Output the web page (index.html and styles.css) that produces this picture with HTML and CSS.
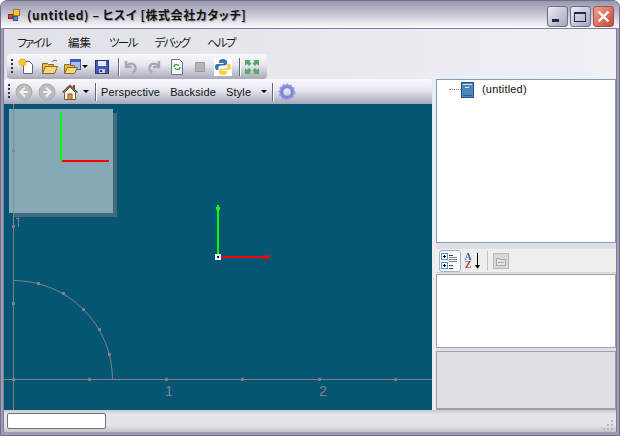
FILE: index.html
```html
<!DOCTYPE html>
<html lang="ja">
<head>
  <meta charset="UTF-8">
  <title>ヒスイ</title>
  <link rel="stylesheet" href="styles.css">
</head>
<body>

<div class="window">
  <div class="titlebar">
    <svg class="app-icon" width="16" height="16" viewBox="0 0 16 16">
      <rect x="2" y="11" width="4" height="3" fill="#c8c8d8"/>
      <rect x="6.5" y="2.5" width="6" height="6" fill="#f5c53a" stroke="#a87818"/>
      <rect x="1.5" y="7.500" width="4" height="4" fill="#d8442c" stroke="#8a2a18"/>
      <rect x="6.5" y="9.500" width="4" height="4" fill="#5a8ad0" stroke="#34588c"/>
    </svg>
    <span class="title-text">(untitled) – ヒスイ [株式会社カタッチ]</span>
    <div class="caption-btns">
      <div class="caption-btn">
        <svg width="21" height="21" viewBox="0 0 21 21"><rect x="5" y="13" width="7" height="3" fill="#1e2a4a"/></svg>
      </div>
      <div class="caption-btn">
        <svg width="21" height="21" viewBox="0 0 21 21"><rect x="4.5" y="6.500" width="11" height="9" fill="none" stroke="#1e2a4a"/><rect x="4" y="6" width="12" height="2" fill="#1e2a4a"/></svg>
      </div>
      <div class="caption-btn caption-close">
        <svg width="21" height="21" viewBox="0 0 21 21"><path d="M5.500 5.500l10 10M15.500 5.500l-10 10" stroke="#fff" stroke-width="2.400"/></svg>
      </div>
    </div>
  </div>

  <div class="client">
    <div class="menubar">
      <span class="menu-item menu-kana">ファイル</span>
      <span class="menu-item">編集</span>
      <span class="menu-item menu-kana">ツール</span>
      <span class="menu-item menu-kana">デバッグ</span>
      <span class="menu-item menu-kana">ヘルプ</span>
    </div>

    <div class="main-strip">
      <div class="toolbar toolbar-main">
        <span class="grip"></span>
        <svg class="tool" width="18" height="18" viewBox="0 0 18 18">
          <path d="M5.500 3.500h6l3 3v9h-9z" fill="#fff" stroke="#5c6478"/>
          <circle cx="4.500" cy="4.500" r="3.500" fill="#f8c828" stroke="#f07818" stroke-dasharray="1 1"/>
        </svg>
        <svg class="tool" width="18" height="18" viewBox="0 0 18 18">
          <path d="M1.500 15.500v-10h5l1 1h5v2" fill="#e8b848" stroke="#8a6a20"/>
          <path d="M1.500 15.500l3-7h12l-3 7z" fill="#f8d878" stroke="#8a6a20"/>
          <path d="M11 4c1-2 3-2 5-1" fill="none" stroke="#4c6cac"/>
        </svg>
        <svg class="tool tool-narrow" width="18" height="18" viewBox="0 0 18 18">
          <rect x="6.500" y="1.500" width="10" height="10" fill="#a8c0f0" stroke="#3c5cac"/>
          <rect x="7" y="2" width="9" height="2" fill="#3c64c8"/>
          <path d="M0.500 15.500v-9h5l1 1h4v2" fill="#e8b848" stroke="#8a6a20"/>
          <path d="M0.500 15.500l3-6h10l-3 6z" fill="#f8d878" stroke="#8a6a20"/>
        </svg>
        <span class="arrow arrow-open"></span>
        <svg class="tool" width="18" height="18" viewBox="0 0 18 18">
          <rect x="2.500" y="2.500" width="13" height="13" fill="#4a58b8" stroke="#2c3478"/>
          <rect x="5" y="3" width="8" height="5" fill="#e8ecf8"/>
          <rect x="6" y="11" width="6" height="4" fill="#c8ccd8"/>
          <rect x="7" y="12" width="2" height="2" fill="#2c3478"/>
        </svg>
        <span class="sep"></span>
        <svg class="tool" width="18" height="18" viewBox="0 0 18 18">
          <path d="M4 3v6h6M4.500 8.500c2-4 8-4 9 1 .5 2-1 4-3 5" fill="none" stroke="#a8a8b4" stroke-width="2.400"/>
        </svg>
        <svg class="tool" width="18" height="18" viewBox="0 0 18 18">
          <path d="M14 3v6H8M13.500 8.500c-2-4-8-4-9 1-.5 2 1 4 3 5" fill="none" stroke="#a8a8b4" stroke-width="2.400"/>
        </svg>
        <svg class="tool" width="18" height="18" viewBox="0 0 18 18">
          <path d="M3.500 1.500h8l3 3v12h-11z" fill="#f8f8fc" stroke="#6a7288"/>
          <path d="M6 9c0-3 4-3 5-1M12 9c0 3-4 3-5 1" fill="none" stroke="#38a038" stroke-width="1.400"/>
        </svg>
        <svg class="tool" width="18" height="18" viewBox="0 0 18 18">
          <rect x="4.500" y="4.500" width="9" height="9" fill="#b4b4b8" stroke="#9c9ca4"/>
        </svg>
        <svg class="tool" width="18" height="18" viewBox="0 0 18 18">
          <rect width="18" height="18" fill="#fff"/>
          <path d="M9 1c-3 0-4 1-4 2.500V5h4.500v1H3C1.500 6 1 7.500 1 9s.5 3 2 3h1.500v-2c0-1.500 1-2.500 2.500-2.500h4c1 0 2-1 2-2v-2C13 2 11 1 9 1z" fill="#3a76b0"/>
          <path d="M9 17c3 0 4-1 4-2.500V13H8.500v-1H15c1.500 0 2-1.500 2-3s-.5-3-2-3h-1.500v2c0 1.500-1 2.500-2.500 2.500H7c-1 0-2 1-2 2v2C5 16 7 17 9 17z" fill="#f8d040"/>
        </svg>
        <span class="sep"></span>
        <svg class="tool" width="18" height="18" viewBox="0 0 18 18">
          <path d="M2 2h6L6.500 3.500l2 2-2.500 2.500-2-2L2 8z" fill="#58a868"/>
          <path d="M16 2h-6l1.500 1.500-2 2 2.500 2.500 2-2L16 8z" fill="#58a868"/>
          <path d="M2 16h6l-1.500-1.500 2-2L6 10l-2 2-2-2z" fill="#58a868"/>
          <path d="M16 16h-6l1.500-1.500-2-2L12 10l2 2 2-2z" fill="#58a868"/>
        </svg>
      </div>
      <div class="body-split">
        <div class="left-col">
          <div class="toolbar toolbar-view">
            <span class="grip"></span>
            <svg class="tool" width="18" height="18" viewBox="0 0 18 18">
              <circle cx="9" cy="9" r="8" fill="#bcbcc0" stroke="#a8a8ac"/>
              <path d="M10 4.500L5.500 9l4.500 4.500M6 9h7" fill="none" stroke="#f0f0f0" stroke-width="2"/>
            </svg>
            <svg class="tool" width="18" height="18" viewBox="0 0 18 18">
              <circle cx="9" cy="9" r="8" fill="#bcbcc0" stroke="#a8a8ac"/>
              <path d="M8 4.500L12.500 9 8 13.500M12 9H5" fill="none" stroke="#f0f0f0" stroke-width="2"/>
            </svg>
            <svg class="tool tool-narrow" width="18" height="18" viewBox="0 0 18 18">
              <rect x="12" y="2" width="2" height="4" fill="#8a4a28"/>
              <path d="M3.500 9.500v7h11v-7L9 4z" fill="#fbf8ec" stroke="#5a5a4a"/>
              <path d="M1.500 9.500L9 2.500l7.500 7" fill="none" stroke="#4a5a40" stroke-width="1.600"/>
              <path d="M5 5.500L9 2l4 3.500" fill="none" stroke="#c84828"/>
              <rect x="7" y="11" width="4" height="5.500" fill="#e89828" stroke="#8a5a18"/>
            </svg>
            <span class="arrow arrow-home"></span>
            <span class="sep sep-tight"></span>
            <span class="tool-label">Perspective</span>
            <span class="tool-label">Backside</span>
            <span class="tool-label">Style</span>
            <span class="arrow arrow-style"></span>
            <span class="sep"></span>
            <svg class="tool" width="18" height="18" viewBox="0 0 18 18">
              <circle cx="9" cy="9" r="5.500" fill="none" stroke="#7c88dc" stroke-width="3.500"/>
              <circle cx="9" cy="9" r="7.500" fill="none" stroke="#9ca4e4" stroke-width="2" stroke-dasharray="2.500 1.300"/>
            </svg>
          </div>

          <div class="viewport">
            <svg class="scene" width="428" height="306" viewBox="0 0 428 306" shape-rendering="crispEdges">
              <!-- axes -->
              <line x1="9.500" y1="0" x2="9.500" y2="306" stroke="#7e8288"/>
              <line x1="0" y1="275.500" x2="428" y2="275.500" stroke="#7e8288"/>
              <g fill="#7e7e7e">
                <rect x="8" y="198" width="3" height="3"/>
                <rect x="8" y="274" width="3" height="3"/>
                <rect x="84" y="274" width="3" height="3"/>
                <rect x="161" y="274" width="3" height="3"/>
                <rect x="237" y="274" width="3" height="3"/>
                <rect x="314" y="274" width="3" height="3"/>
                <rect x="390" y="274" width="3" height="3"/>
                <rect x="33" y="178" width="3" height="3"/>
                <rect x="58" y="188" width="3" height="3"/>
                <rect x="78" y="204" width="3" height="3"/>
                <rect x="94" y="224" width="3" height="3"/>
                <rect x="104" y="249" width="3" height="3"/>
              </g>
              <path d="M9.500 176.500A99 99 0 0 1 108.500 275" fill="none" stroke="#7e8288" shape-rendering="auto"/>
              <text class="scale-label" x="165" y="292">1</text>
              <text class="scale-label" x="319" y="292">2</text>

              <!-- inset view -->
              <rect x="9" y="9" width="104" height="104" fill="#436a7b"/>
              <rect x="5" y="5" width="104" height="104" fill="#86a9b8"/>
              <line x1="9.500" y1="0" x2="9.500" y2="122" stroke="#808c94"/>
              <rect x="8" y="45" width="3" height="3" fill="#808c94"/>
              <line x1="14.500" y1="113" x2="14.500" y2="123" stroke="#7e8288"/>
              <line x1="12" y1="114.500" x2="14" y2="114.500" stroke="#7e8288"/>
              <rect x="8" y="121" width="3" height="3" fill="#7e7e7e"/>
              <rect x="56" y="9" width="2" height="48" fill="#00ff00"/>
              <rect x="58" y="56" width="47" height="2" fill="#ff0000"/>

              <!-- manipulator -->
              <rect x="213" y="101" width="2" height="50" fill="#00ff00"/>
              <rect x="212" y="103" width="4" height="3" fill="#00ff00"/>
              <rect x="215" y="152" width="51" height="2" fill="#ff0000"/>
              <rect x="261" y="151" width="3" height="4" fill="#ff0000"/>
              <rect x="211" y="150" width="6" height="6" fill="#fff"/>
              <rect x="213" y="152" width="2" height="2" fill="#0000e0"/>
            </svg>
          </div>
        </div>

        <div class="right-col">
          <div class="tree-pane">
            <div class="tree-row">
              <span class="tree-dots"></span>
              <svg width="14" height="16" viewBox="0 0 14 16">
                <rect x="0.500" y="0.500" width="12" height="15" fill="#4c88b8" stroke="#2c4c98"/>
                <rect x="2" y="2" width="9" height="1" fill="#c8dcf0"/>
                <rect x="4" y="5" width="4" height="1" fill="#e8e0f8"/>
                <rect x="2" y="13" width="9" height="1" fill="#2c5c98"/>
              </svg>
              <span class="tree-label">(untitled)</span>
            </div>
          </div>
          <div class="prop-toolbar">
            <div class="prop-btn prop-btn-on">
              <svg width="20" height="20" viewBox="0 0 20 20">
                <rect x="1.500" y="2.500" width="6" height="6" fill="#fff" stroke="#5c94c8"/>
                <rect x="1.500" y="11.500" width="6" height="6" fill="#fff" stroke="#5c94c8"/>
                <path d="M3 5.500h3M4.500 4v3M3 14.500h3M4.500 13v3" stroke="#000"/>
                <path d="M9 4.500h4M9 14.500h4M9 17.500h4" stroke="#404040"/>
                <path d="M9 6.500h8M9 8.500h8M9 10.500h8" stroke="#808080"/>
              </svg>
            </div>
            <div class="prop-btn">
              <span class="az">A Z</span>
              <svg class="az-arrow" width="6" height="20" viewBox="0 0 6 20">
                <path d="M3.500 2v14" stroke="#000"/>
                <path d="M1 14h5l-2.500 4z" fill="#000"/>
              </svg>
            </div>
            <span class="prop-sep"></span>
            <svg class="prop-pages" width="16" height="16" viewBox="0 0 16 16">
              <rect width="16" height="16" fill="#b8b8b8"/>
              <rect x="1" y="1" width="14" height="14" fill="#d8d8d8"/>
              <path d="M3.500 12.500v-7h3v1h6v6z" fill="#e4e4e4" stroke="#a8a8a8"/>
              <path d="M5 9.500h6" stroke="#a8a8a8"/>
            </svg>
          </div>
          <div class="prop-grid"></div>
          <div class="prop-desc"></div>
        </div>
      </div>
    </div>

    <div class="statusbar">
      <div class="progress"></div>
      <svg class="resize-grip" width="12" height="12" viewBox="0 0 12 12">
        <rect x="9" y="1" width="2" height="2" fill="#b8b8c4"/>
        <rect x="5" y="5" width="2" height="2" fill="#b8b8c4"/>
        <rect x="9" y="5" width="2" height="2" fill="#b8b8c4"/>
        <rect x="1" y="9" width="2" height="2" fill="#b8b8c4"/>
        <rect x="5" y="9" width="2" height="2" fill="#b8b8c4"/>
        <rect x="9" y="9" width="2" height="2" fill="#b8b8c4"/>
      </svg>
    </div>
  </div>
</div>

</body>
</html>
```

FILE: styles.css
```css
html, body {
  margin: 0;
  height: 100%;
}

body {
  background: #ffffff;
  font-family: "Noto Sans CJK JP", "Liberation Sans", sans-serif;
  font-feature-settings: "palt";
  overflow: hidden;
}

.window {
  width: 620px;
  height: 436px;
  box-sizing: border-box;
  display: flex;
  flex-direction: column;
  background: #9c9cb4;
  border: 1px solid #6f6f88;
  border-radius: 7px 7px 0 0;
  padding: 0 2px 3px;
}

.titlebar {
  height: 27px;
  flex: none;
  display: flex;
  align-items: center;
  margin: 0 -2px;
  padding: 0 5px 0 6px;
  background: linear-gradient(#9896ae 0%, #b4b3c6 30%, #dcdce6 70%, #fbfbfd 100%);
  border-radius: 6px 6px 0 0;
}

.app-icon {
  margin-right: 4px;
  flex: none;
}

.title-text {
  font-size: 12px;
  font-weight: bold;
  color: #111111;
  letter-spacing: 0.55px;
  text-shadow: 1px 1px 1px #a0a0a8;
  white-space: nowrap;
}

.caption-btns {
  display: flex;
  gap: 2px;
  margin-left: auto;
  align-self: flex-end;
  margin-bottom: 1px;
}

.caption-btn {
  width: 21px;
  height: 21px;
  box-sizing: border-box;
  border: 1px solid #68708c;
  border-radius: 3px;
  background: linear-gradient(135deg, #eeeef4, #a4a4bc);
  display: flex;
  align-items: center;
  justify-content: center;
}

.caption-btn svg {
  flex: none;
}

.caption-close {
  background: linear-gradient(135deg, #f0a090, #c84838);
  border-color: #a05050;
}

.client {
  flex: 1;
  min-height: 0;
  display: flex;
  flex-direction: column;
  background: #dfdfe5;
  border: 1px solid #7e7e96;
  border-bottom: 0;
}

.menubar {
  height: 25px;
  flex: none;
  display: flex;
  align-items: center;
  padding-left: 4px;
  background: linear-gradient(90deg, #e0e0e8, #f0f0f5);
  font-size: 11.5px;
  color: #1a1a1a;
}

.menu-item {
  padding: 0 9px;
  white-space: nowrap;
}

.menu-kana {
  letter-spacing: -1.7px;
}

.main-strip {
  flex: 1;
  min-height: 0;
  display: flex;
  flex-direction: column;
  background: linear-gradient(90deg, #e0e0e8, #f0f0f5);
}

.toolbar {
  display: flex;
  align-items: center;
  flex: none;
  height: 25px;
  background: linear-gradient(#fafafc 0%, #e6e6ee 45%, #a8a8bc 100%);
  font-family: "Liberation Sans", sans-serif;
  font-size: 11px;
  letter-spacing: 0.15px;
  color: #111111;
}

.toolbar-main {
  width: 260px;
  box-sizing: border-box;
  margin-left: 3px;
  padding-left: 4px;
  border-radius: 4px;
}

.toolbar-view {
  padding-left: 4px;
  border-radius: 3px 3px 0 0;
}

.grip {
  width: 2px;
  height: 16px;
  flex: none;
  margin-right: 3px;
  background: repeating-linear-gradient(#33334a 0 2px, transparent 2px 4px);
}

.tool {
  flex: none;
  margin: 0 3px 0 2px;
}

.tool-narrow {
  margin-right: 0;
}

.arrow {
  flex: none;
  width: 0;
  height: 0;
  border-left: 3px solid transparent;
  border-right: 3px solid transparent;
  border-top: 3px solid #000000;
}

.arrow-open {
  margin: 0 3px 0 0;
}

.arrow-home {
  margin: 0 3px 0 4px;
}

.arrow-style {
  margin: 0 2px 0 5px;
}

.sep {
  width: 1px;
  height: 18px;
  flex: none;
  margin: 0 3px;
  background: #64647c;
  box-shadow: 1px 0 0 #ffffff;
}

.toolbar-main .sep {
  margin: 0 1px 0 4px;
}

.sep-tight {
  margin-right: 0;
}

.tool-label {
  padding: 0 5px;
  white-space: nowrap;
}

.body-split {
  flex: 1;
  min-height: 0;
  display: flex;
  gap: 4px;
}

.left-col {
  width: 428px;
  flex: none;
  display: flex;
  flex-direction: column;
}

.viewport {
  flex: 1;
  min-height: 0;
  background: #065673;
  overflow: hidden;
}

.scene {
  display: block;
}

.scale-label {
  font-family: "Liberation Sans", sans-serif;
  font-size: 14px;
  fill: #7e8288;
  text-anchor: middle;
}

.right-col {
  flex: 1;
  display: flex;
  flex-direction: column;
  background: #dfdfe5;
}

.tree-pane {
  height: 164px;
  flex: none;
  box-sizing: border-box;
  background: #ffffff;
  border: 1px solid #7f9db9;
  padding: 1px 0 0 12px;
}

.tree-row {
  display: flex;
  align-items: center;
  height: 17px;
}

.tree-dots {
  width: 12px;
  border-top: 1px dotted #808080;
}

.tree-label {
  margin: 0 0 2px 7px;
  font-size: 11px;
  letter-spacing: 0.2px;
  color: #111111;
  font-family: "Liberation Sans", sans-serif;
}

.prop-toolbar {
  height: 24px;
  flex: none;
  box-sizing: border-box;
  margin-top: 6px;
  display: flex;
  align-items: center;
  gap: 1px;
  padding-left: 3px;
  background: #eeeeec;
  border-bottom: 1px solid #d8d4c8;
}

.prop-btn {
  height: 22px;
  display: flex;
  align-items: center;
  justify-content: center;
  box-sizing: border-box;
}

.prop-btn-on {
  width: 22px;
  border: 1px solid #9cb4cc;
  border-radius: 3px;
  background: #fbfbfb;
}

/* one wrapped word pair, top line blue and bottom line red */
.az {
  width: 8px;
  margin-left: 2px;
  font-family: "Liberation Serif", serif;
  font-size: 10px;
  font-weight: bold;
  line-height: 8px;
  text-align: center;
  color: transparent;
  background: linear-gradient(#3c5cb4 50%, #a83c48 50%);
  -webkit-background-clip: text;
  background-clip: text;
}

.az-arrow {
  flex: none;
  margin-left: 2px;
}

.prop-sep {
  width: 1px;
  height: 20px;
  margin: 0 4px 0 6px;
  background: #c4c4c4;
}

.prop-pages {
  flex: none;
}

.prop-grid {
  height: 74px;
  flex: none;
  box-sizing: border-box;
  margin-top: 1px;
  background: #ffffff;
  border: 1px solid #a0a0a8;
}

.prop-desc {
  flex: 1;
  margin-top: 3px;
  background: #dfdfe5;
  border: 1px solid #a0a0a8;
  border-bottom-width: 2px;
}

.statusbar {
  height: 22px;
  flex: none;
  display: flex;
  align-items: center;
  justify-content: space-between;
  padding: 0 2px 0 3px;
  background: linear-gradient(#c8c8d0 0%, #e4e4ea 20%, #e4e4ea 70%, #c4c4cc 100%);
}

.progress {
  width: 99px;
  height: 16px;
  box-sizing: border-box;
  background: #ffffff;
  border: 1px solid #707078;
  border-radius: 2px;
}

.resize-grip {
  align-self: flex-end;
  margin-bottom: 1px;
}
```
